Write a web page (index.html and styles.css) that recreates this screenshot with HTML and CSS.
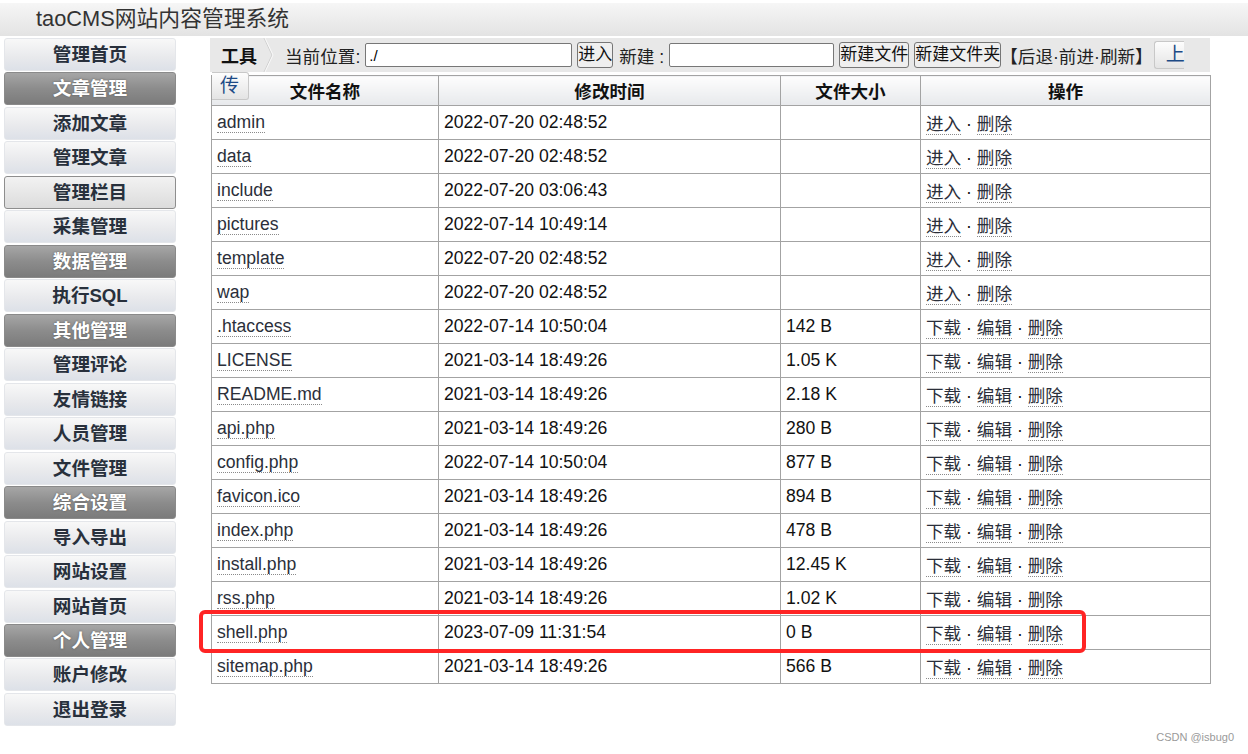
FILE: index.html
```html
<!DOCTYPE html>
<html lang="zh-CN">
<head>
    <meta charset="UTF-8">
    <title>taoCMS网站内容管理系统</title>
    <link rel="stylesheet" href="styles.css">
</head>
<body>
    <div class="header">
        <h1>taoCMS网站内容管理系统</h1>
    </div>

    <div class="layout">
        <ul class="menu">
            <li>管理首页</li>
            <li class="group">文章管理</li>
            <li>添加文章</li>
            <li>管理文章</li>
            <li class="active">管理栏目</li>
            <li>采集管理</li>
            <li class="group">数据管理</li>
            <li>执行SQL</li>
            <li class="group">其他管理</li>
            <li>管理评论</li>
            <li>友情链接</li>
            <li>人员管理</li>
            <li>文件管理</li>
            <li class="group">综合设置</li>
            <li>导入导出</li>
            <li>网站设置</li>
            <li>网站首页</li>
            <li class="group">个人管理</li>
            <li>账户修改</li>
            <li>退出登录</li>
        </ul>

        <div class="main">
            <div class="toolbar">
                <b class="tool-title">工具</b>
                <svg class="crumb" width="12" height="34" viewBox="0 0 12 34">
                    <polyline points="1,0 9,17 1,34" fill="none" stroke="#cfcfcf" stroke-width="1"/>
                    <polyline points="2,0 10,17 2,34" fill="none" stroke="#f8f8f8" stroke-width="1"/>
                </svg>
                <span class="label">当前位置:</span>
                <input type="text" class="path-input" value="./">
                <button class="btn">进入</button>
                <span class="label new-label">新建 :</span>
                <input type="text" class="name-input">
                <button class="btn">新建文件</button>
                <button class="btn">新建文件夹</button>
                <span class="history">【后退·前进·刷新】</span>
                <span class="upload upload-top">上</span>
            </div>
            <span class="upload upload-bottom">传</span>

            <table class="files">
                <thead>
                    <tr>
                        <th class="col-name">文件名称</th>
                        <th class="col-time">修改时间</th>
                        <th class="col-size">文件大小</th>
                        <th>操作</th>
                    </tr>
                </thead>
                <tbody id="fileRows">
                    <!-- rows are filled by the script below -->
                </tbody>
            </table>
        </div>
    </div>

    <div class="mark"></div>
    <div class="watermark">CSDN @isbug0</div>

    <script>
        const files = [
            ['admin', '2022-07-20 02:48:52', '', true],
            ['data', '2022-07-20 02:48:52', '', true],
            ['include', '2022-07-20 03:06:43', '', true],
            ['pictures', '2022-07-14 10:49:14', '', true],
            ['template', '2022-07-20 02:48:52', '', true],
            ['wap', '2022-07-20 02:48:52', '', true],
            ['.htaccess', '2022-07-14 10:50:04', '142 B'],
            ['LICENSE', '2021-03-14 18:49:26', '1.05 K'],
            ['README.md', '2021-03-14 18:49:26', '2.18 K'],
            ['api.php', '2021-03-14 18:49:26', '280 B'],
            ['config.php', '2022-07-14 10:50:04', '877 B'],
            ['favicon.ico', '2021-03-14 18:49:26', '894 B'],
            ['index.php', '2021-03-14 18:49:26', '478 B'],
            ['install.php', '2021-03-14 18:49:26', '12.45 K'],
            ['rss.php', '2021-03-14 18:49:26', '1.02 K'],
            ['shell.php', '2023-07-09 11:31:54', '0 B'],
            ['sitemap.php', '2021-03-14 18:49:26', '566 B']
        ];

        const tbody = document.getElementById('fileRows');

        files.forEach(([name, time, size, isDir]) => {
            const actions = isDir
                ? '<a href="#">进入</a> · <a href="#">删除</a>'
                : '<a href="#">下载</a> · <a href="#">编辑</a> · <a href="#">删除</a>';

            const row = document.createElement('tr');
            row.innerHTML = `
                <td><a href="#">${name}</a></td>
                <td>${time}</td>
                <td>${size}</td>
                <td>${actions}</td>
            `;
            tbody.appendChild(row);
        });
    </script>
</body>
</html>
```

FILE: styles.css
```css
body {
    margin: 0;
    font-family: "Liberation Sans", "Noto Sans CJK SC", sans-serif;
    font-size: 17.6px;
    color: #111;
    background: #fff;
}

.header {
    height: 33px;
    border-top: 3px solid #fff;
    background: linear-gradient(#f6f6f6, #e3e3e3);
    box-shadow: 0 -1px 0 #e6e6e6;
}

.header h1 {
    margin: 0;
    padding-left: 36px;
    font-size: 21.8px;
    font-weight: normal;
    line-height: 32px;
    color: #333;
}

.layout {
    display: flex;
    align-items: flex-start;
    padding-top: 2px;
}

/* left menu */
.menu {
    list-style: none;
    margin: 0 0 0 4px;
    padding: 0;
    width: 172px;
}

.menu li {
    box-sizing: border-box;
    height: 33px;
    margin-bottom: 1.47px;
    border: 1px solid #e4e6ea;
    border-radius: 3px;
    background: linear-gradient(#f8f8f8, #e8e9ec 60%, #dde1e8);
    font-weight: bold;
    font-size: 18.6px;
    line-height: 31px;
    text-align: center;
    color: #28303c;
}

.menu li.group {
    border-color: #8a8a8a;
    background: linear-gradient(#a6a6a6, #8c8c8c 50%, #7b7b7b);
    color: #fff;
    text-shadow: 0 0 2px #555;
}

.menu li.active {
    border-color: #8e8e8e;
    background: linear-gradient(#f2f2f2, #dcdcdc);
}

/* main area */
.main {
    position: relative;
    margin-left: 34px;
    width: 1000px;
}

.toolbar {
    display: flex;
    align-items: center;
    height: 34px;
    background: #e8e8e8;
    white-space: nowrap;
    overflow: hidden;
}

.tool-title {
    margin-left: 11px;
    font-size: 18px;
    color: #111;
}

.crumb {
    margin: 0 10px 0 6px;
}

.label {
    color: #222;
}

.path-input,
.name-input {
    box-sizing: border-box;
    height: 24px;
    margin: 0 5px 0 5px;
    padding: 0 3px;
    border: 1px solid #777;
    border-radius: 2px;
    font-family: inherit;
    font-size: 15px;
    background: #fff;
}

.path-input {
    width: 207px;
}

.name-input {
    width: 165px;
}

.btn {
    box-sizing: border-box;
    height: 26px;
    margin-right: 5px;
    padding: 0;
    border: 1px solid #767676;
    border-radius: 3px;
    background: #efefef;
    font-family: inherit;
    font-size: 17px;
    line-height: 22px;
    color: #111;
}

.new-label {
    margin-left: 1px;
}

.history {
    margin-left: -6px;
    color: #222;
}

.upload {
    box-sizing: border-box;
    display: inline-block;
    height: 28px;
    border: 1px solid #c8c8c8;
    background: linear-gradient(#fdfdfd, #e4e4e4);
    font-size: 19px;
    line-height: 25px;
    color: #1d4a86;
}

.upload-top {
    width: 30px;
    margin-left: 1px;
    padding-left: 11px;
    border-right: none;
    border-radius: 3px 0 0 3px;
}

.upload-bottom {
    position: absolute;
    left: 2px;
    top: 34px;
    width: 37px;
    padding-left: 8px;
    border-left: none;
    border-radius: 0 3px 3px 0;
    z-index: 2;
}

/* file table */
.files {
    width: 1000px;
    margin-top: 3px;
    margin-left: 1px;
    border-collapse: collapse;
    table-layout: fixed;
}

.files th,
.files td {
    border: 1px solid #a3a3a3;
    padding: 0 5px;
    text-align: left;
}

.files th {
    height: 29px;
    background: linear-gradient(#fdfdfd, #e7e9ec);
    font-size: 17.6px;
    text-align: center;
    color: #111;
}

.files td {
    height: 33px;
}

.col-name {
    width: 216px;
}

.col-time {
    width: 331px;
}

.col-size {
    width: 129px;
}

.files a {
    color: #2b2f3a;
    text-decoration: none;
    border-bottom: 1px dotted #8a8a8a;
}

/* annotation + watermark */
.mark {
    position: absolute;
    left: 199px;
    top: 610px;
    width: 887px;
    height: 43px;
    box-sizing: border-box;
    border: 4px solid #ff2424;
    border-radius: 6px;
}

.watermark {
    position: absolute;
    right: 14px;
    top: 731px;
    font-size: 11px;
    color: #9a9a9a;
}
```
